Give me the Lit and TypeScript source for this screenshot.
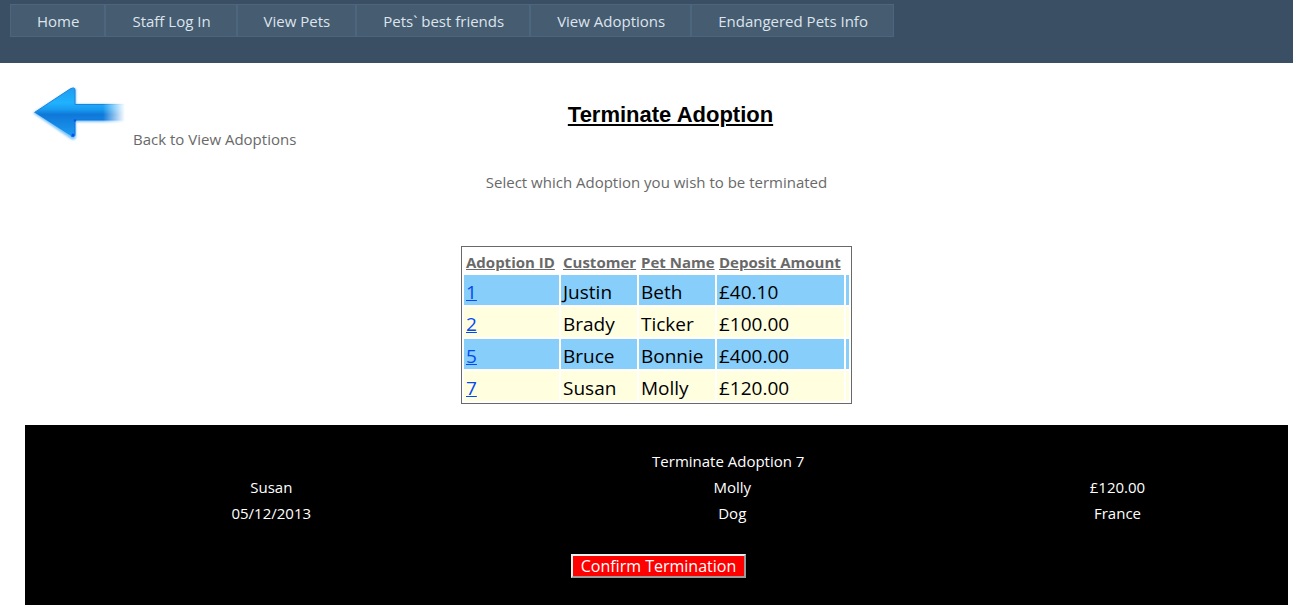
import { LitElement, html, css } from "lit";
import { customElement, property } from "lit/decorators.js";

interface Adoption {
  id: number;
  customer: string;
  pet: string;
  deposit: string;
}

const ADOPTIONS: Adoption[] = [
  { id: 1, customer: "Justin", pet: "Beth", deposit: "£40.10" },
  { id: 2, customer: "Brady", pet: "Ticker", deposit: "£100.00" },
  { id: 5, customer: "Bruce", pet: "Bonnie", deposit: "£400.00" },
  { id: 7, customer: "Susan", pet: "Molly", deposit: "£120.00" },
];

const PAGES = [
  "Home",
  "Staff Log In",
  "View Pets",
  "Pets` best friends",
  "View Adoptions",
  "Endangered Pets Info",
];

@customElement("site-menu")
export class SiteMenu extends LitElement {
  static styles = css`
    :host {
      display: block;
      background: #3a4f63;
      padding: 4px 10px 26px;
    }
    .items {
      display: flex;
      margin: 0;
      padding: 0;
      list-style: none;
    }
    .link {
      display: block;
      padding: 5px 25px 4px 26px;
      border: 1px solid #4e667d;
      background: #465c71;
      color: #dde4ec;
      line-height: 22px;
      text-decoration: none;
      white-space: nowrap;
    }
  `;

  render() {
    return html`<nav>
      <ul class="items">
        ${PAGES.map((p) => html`<li><a class="link" href="#">${p}</a></li>`)}
      </ul>
    </nav>`;
  }
}

@customElement("adoption-table")
export class AdoptionTable extends LitElement {
  static styles = css`
    :host {
      display: block;
    }
    .grid {
      margin: 0 auto;
      border: 1px solid #696969;
      border-spacing: 2px;
      table-layout: fixed;
      width: 391px;
      color: #000;
      font-size: 19px;
    }
    .id {
      width: 95px;
    }
    .customer,
    .pet {
      width: 76px;
    }
    .deposit {
      width: 127px;
    }
    th {
      padding: 2px 2px 0;
      height: 22px;
      color: #696969;
      font-size: 15px;
      line-height: 22px;
      text-align: left;
      text-decoration: underline;
      white-space: nowrap;
    }
    td {
      padding: 4px 2px 0;
      height: 26px;
      line-height: 26px;
      background: #ffffe0;
    }
    .odd td {
      background: #87cefa;
    }
    .tail {
      padding: 0;
    }
    a {
      color: #034af3;
    }
  `;

  @property({ attribute: false }) rows: Adoption[] = [];

  render() {
    return html`<table class="grid">
      <colgroup>
        <col class="id" />
        <col class="customer" />
        <col class="pet" />
        <col class="deposit" />
        <col />
      </colgroup>
      <thead>
        <tr>
          <th>Adoption ID</th>
          <th>Customer</th>
          <th>Pet Name</th>
          <th>Deposit Amount</th>
        </tr>
      </thead>
      <tbody>
        ${this.rows.map(
          (r, i) => html`<tr class=${i % 2 ? "even" : "odd"}>
            <td><a href="#">${r.id}</a></td>
            <td>${r.customer}</td>
            <td>${r.pet}</td>
            <td>${r.deposit}</td>
            <td class="tail"></td>
          </tr>`
        )}
      </tbody>
    </table>`;
  }
}

@customElement("termination-panel")
export class TerminationPanel extends LitElement {
  static styles = css`
    :host {
      display: block;
      padding: 23px 0 27px;
      background: #000;
      color: #fff;
      text-align: center;
    }
    .details {
      width: 100%;
      border-collapse: collapse;
      table-layout: fixed;
    }
    .first {
      width: 39%;
    }
    .second {
      width: 34%;
    }
    td {
      padding: 0;
      line-height: 26px;
    }
    .heading {
      padding-right: 8px;
    }
    .confirm {
      margin: 28px 0 0 4px;
      padding: 1px 8px 0;
      border: 2px outset #f0f0f0;
      border-radius: 0;
      background: #f00;
      color: #fff;
      font-family: inherit;
      font-size: 16px;
      line-height: 19px;
    }
  `;

  render() {
    return html`
      <table class="details">
        <colgroup>
          <col class="first" />
          <col class="second" />
          <col />
        </colgroup>
        <tbody>
          <tr><td></td><td class="heading">Terminate Adoption 7</td><td></td></tr>
          <tr><td>Susan</td><td>Molly</td><td>£120.00</td></tr>
          <tr><td>05/12/2013</td><td>Dog</td><td>France</td></tr>
        </tbody>
      </table>
      <button class="confirm" type="button">Confirm Termination</button>
    `;
  }
}

@customElement("app-root")
export class AppRoot extends LitElement {
  static styles = css`
    :host {
      display: block;
      background: #fff;
      color: #696969;
      font-family: "Segoe UI", "Open Sans", "Noto Sans", sans-serif;
      font-size: 15px;
    }
    .content {
      padding: 22px 5px 0 25px;
    }
    .top {
      display: grid;
      grid-template-columns: 1fr auto 1fr;
      align-items: start;
    }
    .back {
      display: flex;
      align-items: flex-end;
      gap: 4px;
      color: inherit;
      line-height: 24px;
      text-decoration: none;
    }
    .arrow {
      display: block;
      margin-bottom: 8px;
    }
    .title {
      margin: 16px 0 0;
      padding-left: 28px;
      color: #000;
      font: bold 22px/28px "Liberation Sans", Arial, sans-serif;
      text-decoration: underline;
    }
    .hint {
      margin: 20px 0 53px;
      line-height: 22px;
      text-align: center;
    }
    .panel {
      margin-top: 21px;
    }
  `;

  render() {
    return html`
      <site-menu></site-menu>
      <main class="content">
        <div class="top">
          <a class="back" href="#">
            <svg class="arrow" width="104" height="58" viewBox="0 0 104 58" aria-hidden="true">
              <defs>
                <linearGradient id="body" x1="0" y1="3" x2="0" y2="52" gradientUnits="userSpaceOnUse">
                  <stop offset="0" stop-color="#1f9df0" />
                  <stop offset="0.3" stop-color="#20b2ff" />
                  <stop offset="0.44" stop-color="#189af0" />
                  <stop offset="0.54" stop-color="#0f78d8" />
                  <stop offset="0.75" stop-color="#1588e4" />
                  <stop offset="1" stop-color="#1e9cf4" />
                </linearGradient>
                <linearGradient id="fade" x1="78" y1="0" x2="100" y2="0" gradientUnits="userSpaceOnUse">
                  <stop offset="0" stop-color="#fff" />
                  <stop offset="1" stop-color="#fff" stop-opacity="0" />
                </linearGradient>
                <mask id="tail" maskUnits="userSpaceOnUse" x="0" y="0" width="104" height="58">
                  <rect width="104" height="58" fill="url(#fade)" />
                </mask>
                <filter id="glow" x="-10%" y="-20%" width="120%" height="140%">
                  <feGaussianBlur stdDeviation="1.2" />
                </filter>
              </defs>
              <g mask="url(#tail)">
                <path d="M8 28 46 4Q51 1 51 6V19H102V37H51V51Q51 56 46 54Z" fill="#7fc6fa" filter="url(#glow)" />
                <path d="M9.500 27.500 45 4Q50 1.500 50 5V19.500H102V35H50V49Q50 53 46 51Z" fill="url(#body)" />
                <path d="M9.500 27.500 45 4Q50 1.500 50 5V19.500H102" fill="none" stroke="#2382d8" stroke-width="1" />
                <path d="M102 35H50V49Q50 53 46 51" fill="none" stroke="#1273e0" stroke-width="1" />
                <circle cx="48" cy="50" r="1.500" fill="#0b50ee" />
                <circle cx="50" cy="35.500" r="1.200" fill="#0b50ee" />
              </g>
            </svg>
            <span>Back to View Adoptions</span>
          </a>
          <h1 class="title">Terminate Adoption</h1>
        </div>
        <p class="hint">Select which Adoption you wish to be terminated</p>
        <adoption-table .rows=${ADOPTIONS}></adoption-table>
        <termination-panel class="panel"></termination-panel>
      </main>
    `;
  }
}
